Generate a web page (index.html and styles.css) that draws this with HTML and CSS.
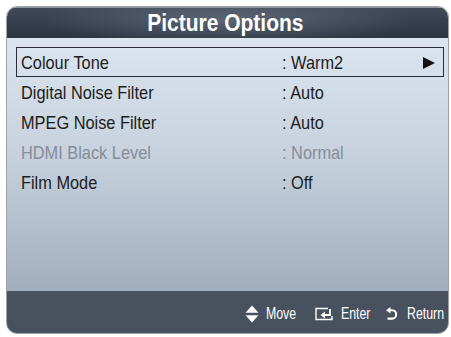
FILE: index.html
```html
<!DOCTYPE html>
<html>
<head>
<meta charset="utf-8">
<link rel="stylesheet" href="styles.css">
</head>
<body>
<div class="panel">
  <div class="header"><span class="title">Picture Options</span></div>
  <div class="content">
    <div class="row selected"><span class="label"><span class="sx">Colour Tone</span></span><span class="value"><span class="sx">: Warm2</span></span><span class="arrow"></span></div>
    <div class="row"><span class="label"><span class="sx">Digital Noise Filter</span></span><span class="value"><span class="sx">: Auto</span></span></div>
    <div class="row"><span class="label"><span class="sx">MPEG Noise Filter</span></span><span class="value"><span class="sx">: Auto</span></span></div>
    <div class="row disabled"><span class="label"><span class="sx">HDMI Black Level</span></span><span class="value"><span class="sx">: Normal</span></span></div>
    <div class="row"><span class="label"><span class="sx">Film Mode</span></span><span class="value"><span class="sx">: Off</span></span></div>
  </div>
  <div class="footer">
    <span class="hint hint-move">
      <svg class="icon" width="14" height="18" viewBox="0 0 14 18"><polygon points="7,0.5 13.5,7.8 0.5,7.8" fill="#fff"/><polygon points="0.5,10.2 13.5,10.2 7,17.5" fill="#fff"/></svg>
      <span class="ft w-move"><span class="fsx">Move</span></span>
    </span>
    <span class="hint hint-enter">
      <svg class="icon" width="19" height="14" viewBox="0 0 19 14"><path d="M13 1.5 H1 V12.5 H17 V9" fill="none" stroke="#fff" stroke-width="1.4"/><path d="M15 2 V8 H9" fill="none" stroke="#fff" stroke-width="1.8"/><polygon points="5.5,8 10,4.5 10,11.5" fill="#fff"/></svg>
      <span class="ft w-enter"><span class="fsx">Enter</span></span>
    </span>
    <span class="hint hint-return">
      <svg class="icon" width="11" height="14" viewBox="0 0 11 14"><path d="M3.5 3.2 H6 A4.1 4.1 0 0 1 6 11.6 H1.5" fill="none" stroke="#fff" stroke-width="2.1"/><polygon points="0,3.2 4.5,0 4.5,6.4" fill="#fff"/></svg>
      <span class="ft w-return"><span class="fsx">Return</span></span>
    </span>
  </div>
</div>
</body>
</html>
```
FILE: styles.css
```css
html, body {
  margin: 0;
  padding: 0;
  background: #ffffff;
}
body {
  font-family: "Liberation Sans", Arial, sans-serif;
}
.panel {
  margin: 6px 0 0 6px;
  width: 443px;
  height: 328px;
  box-sizing: border-box;
  border: 1px solid #9ea3aa;
  border-radius: 11px;
  overflow: hidden;
  display: flex;
  flex-direction: column;
  background: linear-gradient(to bottom, #e1eaf4 0%, #c7d2de 45%, #96a3b3 100%);
}
.header {
  height: 31px;
  flex: none;
  box-sizing: border-box;
  border-top: 1px solid #8c939c;
  background:
    radial-gradient(ellipse 60% 120% at 50% 40%, rgba(120,130,145,0.55), rgba(120,130,145,0) 70%),
    linear-gradient(to bottom, #3f4958 0%, #2c3542 100%);
  color: #ffffff;
  display: flex;
  justify-content: center;
  align-items: center;
  padding-right: 5px;
}
.title {
  display: inline-block;
  font-weight: bold;
  font-size: 24px;
  line-height: 28px;
  white-space: nowrap;
  transform: scaleX(0.875);
  transform-origin: center center;
}
.content {
  flex: 1;
  padding: 9px 4px 0 9px;
}
.row {
  height: 30px;
  box-sizing: border-box;
  display: flex;
  align-items: center;
  padding-left: 4px;
  padding-top: 1px;
  font-size: 19px;
  color: #1c1d20;
  border: 1px solid transparent;
}
.row.selected {
  border-color: #2a2d33;
}
.row.disabled {
  color: #858d98;
}
.sx {
  display: inline-block;
  white-space: nowrap;
  transform: scaleX(0.86);
  transform-origin: left center;
}
.label {
  width: 261px;
  flex: none;
}
.value {
  flex: 1;
}
.arrow {
  width: 0;
  height: 0;
  border-top: 6px solid transparent;
  border-bottom: 6px solid transparent;
  border-left: 12px solid #111;
  margin-right: 8px;
}
.footer {
  height: 42px;
  flex: none;
  box-sizing: border-box;
  background: #48525f;
  display: flex;
  justify-content: flex-end;
  align-items: center;
  padding-right: 4px;
  padding-top: 4px;
  color: #ffffff;
  font-size: 16px;
}
.hint {
  display: flex;
  align-items: center;
}
.hint-move {
  gap: 7px;
  margin-right: 19px;
}
.hint-enter {
  gap: 7px;
  margin-right: 16px;
}
.hint-return {
  gap: 10px;
}
.icon {
  display: block;
}
.ft {
  display: block;
  white-space: nowrap;
  line-height: 20px;
}
.w-move { width: 30px; }
.w-enter { width: 29px; }
.w-return { width: 37px; }
.fsx {
  display: inline-block;
  transform: scaleX(0.77);
  transform-origin: left center;
}
```
